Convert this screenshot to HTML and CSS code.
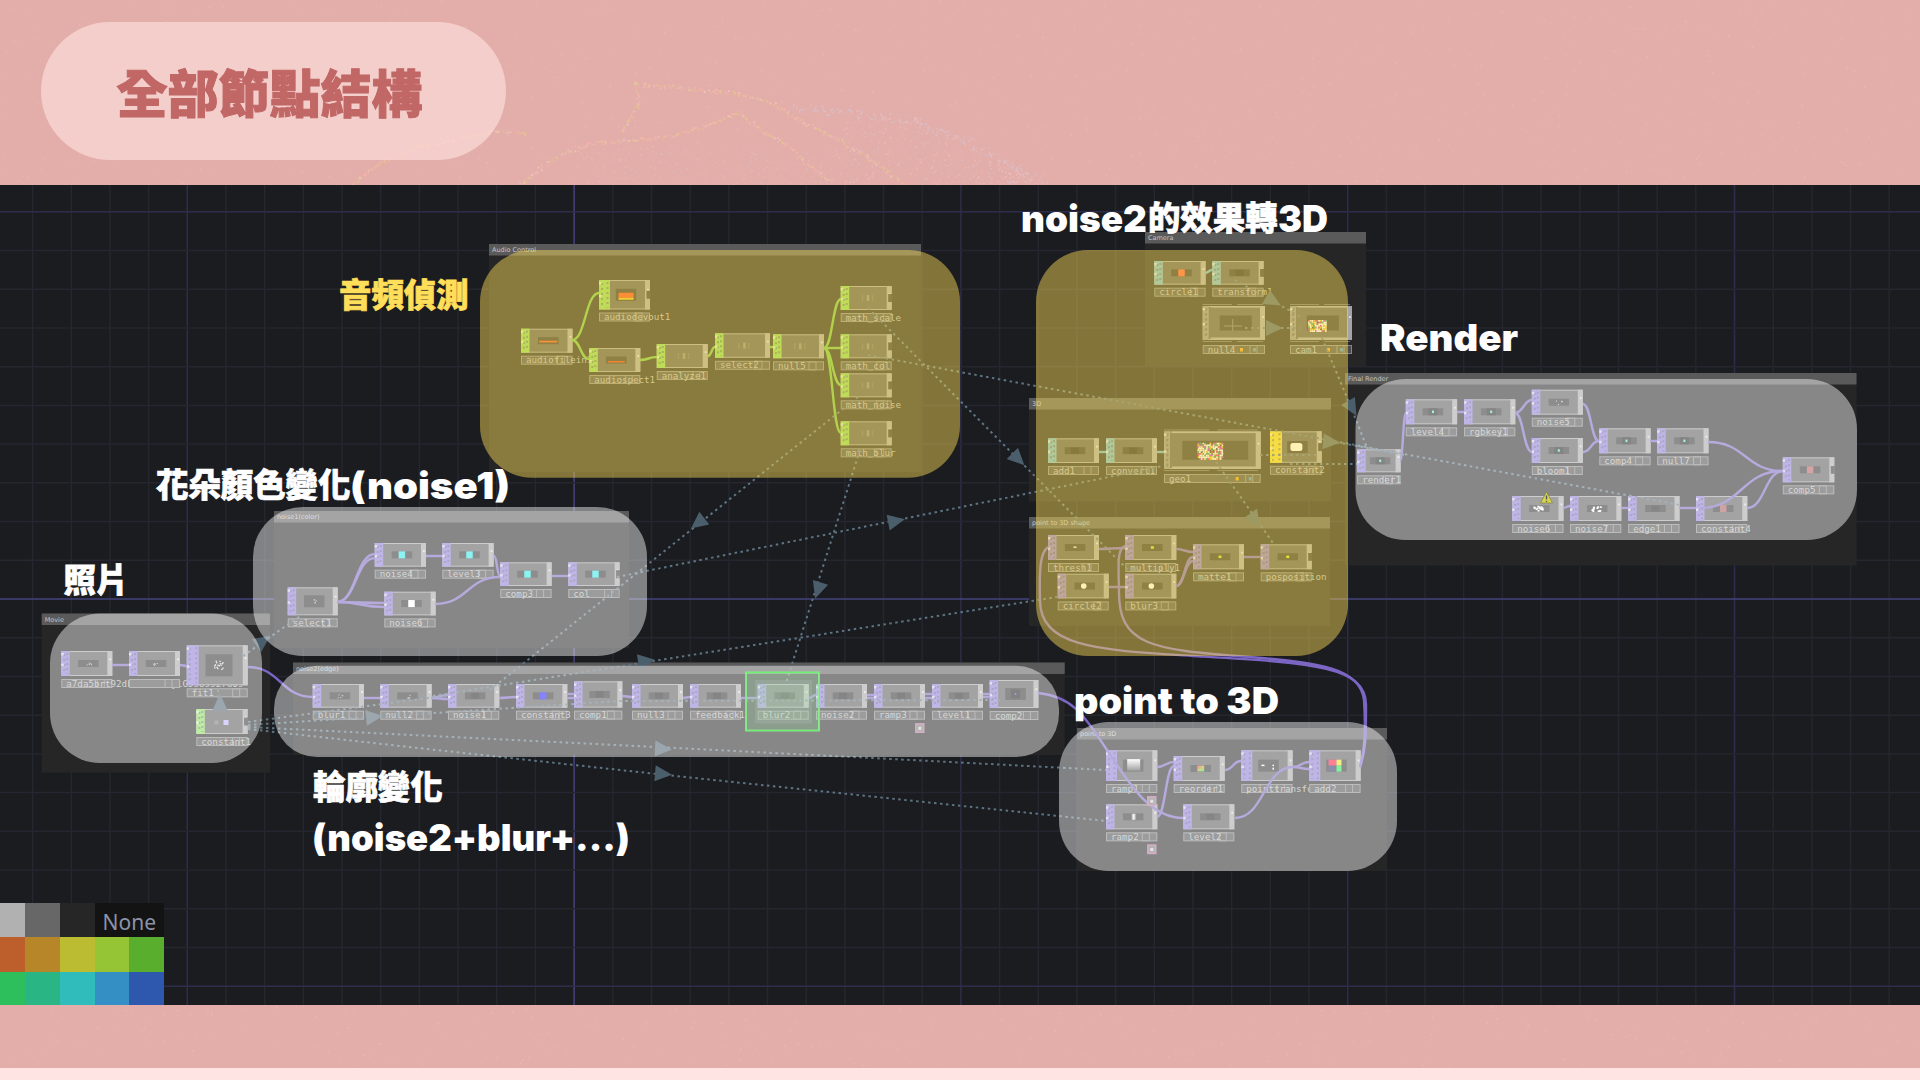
FILE: index.html
```html
<!DOCTYPE html>
<html lang="zh-Hant">
<head>
<meta charset="utf-8">
<title>全部節點結構</title>
<link rel="stylesheet" href="styles.css">
</head>
<body>
<div class="slide">
  <svg class="backdrop" id="backdrop" width="1920" height="1068" viewBox="0 0 1920 1068" aria-hidden="true"></svg>
  <header class="header">
    <h1 class="title">全部節點結構</h1>
  </header>
  <main class="network">
    <svg class="graph" id="graph" width="1920" height="820" viewBox="0 185 1920 820"></svg>
    <div class="palette">
      <span class="swatch light"></span><span class="swatch gray"></span><span class="swatch dark"></span><span class="swatch none">None</span>
      <span class="swatch rust"></span><span class="swatch ochre"></span><span class="swatch olive"></span><span class="swatch lime"></span><span class="swatch leaf"></span>
      <span class="swatch green"></span><span class="swatch jade"></span><span class="swatch teal"></span><span class="swatch sky"></span><span class="swatch blue"></span>
    </div>
  </main>
  <footer class="footer"></footer>
</div>
<script src="graph.js"></script>
</body>
</html>
```

FILE: styles.css
```css
* { box-sizing: border-box; }
body { margin: 0; background: #fee4e2; font-family: "Noto Sans CJK TC", sans-serif; }
.slide { position: relative; width: 1920px; height: 1080px; display: flex; flex-direction: column; overflow: hidden; }
.backdrop { position: absolute; left: 0; top: 0; background: #e3aeaa; }
.header { position: relative; height: 185px; flex: none; padding: 22px 0 0 41px; }
.title { margin: 0; width: 465px; height: 138px; border-radius: 69px; display: flex; align-items: center; justify-content: center; padding: 0 8px 0 0; background: rgba(253, 222, 220, .65); color: #c16766; font-size: 51px; font-weight: 900; line-height: 1; -webkit-text-stroke: 1px #c16766; }
.network { position: relative; height: 820px; flex: none; display: flex; align-items: flex-end; background: #1b1c20; }
.graph { position: absolute; left: 0; top: 0; display: block; }
.footer { flex: none; height: 63px; }

.palette { position: relative; display: grid; grid-template-columns: 25px 34.5px 35px 34.5px 34.5px; grid-template-rows: 34.5px 34.5px 33.5px; }
.swatch.light { background: #b1b1b1; }
.swatch.gray { background: #676767; }
.swatch.dark { background: #262626; }
.swatch.none { grid-column: span 2; background: #131314; color: #8b93a8; font: 21px/38px "Noto Sans", sans-serif; padding-left: 8px; }
.swatch.rust { background: #bd5e2d; }
.swatch.ochre { background: #b68629; }
.swatch.olive { background: #bbbc31; }
.swatch.lime { background: #95c435; }
.swatch.leaf { background: #5aae2e; }
.swatch.green { background: #2dbf5b; }
.swatch.jade { background: #29b584; }
.swatch.teal { background: #31bcbc; }
.swatch.sky { background: #338fc4; }
.swatch.blue { background: #2d58ae; }

.grid-minor { stroke: #25262f; stroke-width: 1.5; }
.grid-major { stroke: #2d2d4b; stroke-width: 1.5; }
.grid-origin { stroke: #45437c; stroke-width: 1.5; }
.group-body { fill: #262626; }
.group-bar { fill: #5a5a5a; }
.group-name { fill: #c4c4c4; font: 6.5px "DejaVu Sans", sans-serif; }
.node-body { fill: #585858; stroke: #a2a2a2; stroke-width: 1; }
.node-edge { fill: #a4a4a4; }
.node-notch { fill: #333; }
.node-screen { fill: #303030; }
.node-ticks { stroke: #4a4a60; stroke-width: 2; stroke-dasharray: 2 3; opacity: .55; fill: none; }
.label-box { fill: #4b4b4b; stroke: #858585; stroke-width: 1; }
.label-cell { fill: none; stroke: #858585; stroke-width: 1; }
.label-text { fill: #b8b8b8; font: 9.2px "DejaVu Sans Mono", monospace; }
.wire { fill: none; stroke-width: 2.4; }
.link { fill: none; stroke: #5d7482; stroke-width: 2; stroke-dasharray: 2.5 3.5; }
.arrow { fill: #4b5e6c; }
.zone-white { fill: #fff; fill-opacity: .45; }
.zone-yellow { fill: #ffde59; fill-opacity: .46; }
.selected { fill: rgba(80, 200, 80, .25); stroke: #4df05a; stroke-width: 1.6; }
.marker { fill: #777; stroke: #bf6a9a; stroke-width: 1.4; }
.caption-cjk { fill: #fff; stroke: #fff; stroke-width: .7; font: 900 32.4px "Noto Sans CJK TC", sans-serif; }
.caption-latin { fill: #fff; font: 900 37px Inter, sans-serif; }
.caption-gold { fill: #ffde59; stroke: #ffde59; }
```

FILE: graph.js
```js
const NS = 'http://www.w3.org/2000/svg';
const graph = document.getElementById('graph');
const backdrop = document.getElementById('backdrop');

function add(parent, tag, attrs, text) {
  const el = document.createElementNS(NS, tag);
  for (const k in attrs) el.setAttribute(k, attrs[k]);
  if (text !== undefined) el.textContent = text;
  parent.appendChild(el);
  return el;
}
const rect = (cls, x, y, w, h, extra) => add(graph, 'rect', Object.assign({ class: cls, x, y, width: w, height: h }, extra));

// Seeded generator, so the grain is the same on every load
let seed = 7;
function rnd() { seed = (seed * 16807) % 2147483647; return seed / 2147483647; }

function speck(x, y, r, fill, opacity) {
  add(backdrop, 'rect', { x: x.toFixed(1), y: y.toFixed(1), width: r, height: r, fill, opacity: opacity.toFixed(2) });
}
function trail(points, colors, spread) {
  for (let i = 0; i < points.length - 1; i++) {
    const [x1, y1] = points[i], [x2, y2] = points[i + 1];
    const n = Math.hypot(x2 - x1, y2 - y1) / 1.5;
    for (let k = 0; k < n; k++) {
      const t = k / n;
      speck(x1 + (x2 - x1) * t + (rnd() - .5) * spread, y1 + (y2 - y1) * t + (rnd() - .5) * spread,
        1.8, colors[Math.floor(rnd() * colors.length)], .2 + rnd() * .55);
    }
  }
}
for (let i = 0; i < 900; i++) speck(rnd() * 1920, rnd() * 184, 1.6, '#f0c4bd', .12 + rnd() * .3);
for (let i = 0; i < 350; i++) speck(rnd() * 1920, 1006 + rnd() * 60, 1.6, '#f0c4bd', .12 + rnd() * .3);
const warm = ['#e6d183', '#f5b9a5', '#f7c6c8', '#e3cf8c', '#ffb5a8'];
trail([[634,84],[683,87],[737,93],[775,103],[795,118],[834,137],[868,157],[904,184]], warm, 4);
trail([[519,184],[557,155],[591,143],[664,137],[708,125],[737,112],[766,133],[785,143],[809,165],[834,184]], warm, 4);
trail([[634,80],[638,103],[621,132]], warm, 3);
trail([[351,184],[380,162],[417,147],[499,130],[527,133]], warm, 3);
trail([[790,108],[830,110],[911,120],[965,140],[1047,184]], ['#d8c3cf', '#ecc3c6', '#cfc6d8'], 9);
for (let i = 0; i < 330; i++) {
  const x = 840 + rnd() * 190, top = 116 + Math.max(0, x - 915) * .5;
  speck(x, top + rnd() * (184 - top), 1.6, rnd() > .5 ? '#d6c6d4' : '#f2c5c5', .15 + rnd() * .45);
}
for (let i = 0; i < 230; i++) {
  const x = 570 + rnd() * 270;
  speck(x, 145 + rnd() * 39, 1.6, rnd() > .5 ? '#d6c6d4' : '#f5bcb6', .1 + rnd() * .4);
}

// Grid
for (let k = -4; k < 46; k++) {
  const x = 187.3 + k * 38.68;
  add(graph, 'line', { x1: x, x2: x, y1: 185, y2: 1005, class: k === 10 ? 'grid-origin' : k % 10 ? 'grid-minor' : 'grid-major' });
}
for (let k = -10; k < 11; k++) {
  const y = 599 + k * 38.72;
  add(graph, 'line', { x1: 0, x2: 1920, y1: y, y2: y, class: k === 0 ? 'grid-origin' : k % 10 ? 'grid-minor' : 'grid-major' });
}

// Groups: name, left, top, right, bottom
[
  ['Audio Control', 489, 244, 921, 472], ['Camera', 1145, 232, 1366, 366], ['3D', 1029, 398, 1331, 501.5],
  ['point to 3D shape', 1029, 517, 1330, 626], ['Final Render', 1345, 373, 1856.5, 565.5], ['Movie', 41.7, 613.5, 270, 772.7],
  ['noise1(color)', 274, 511, 629, 648], ['noise2(edge)', 293, 662.5, 1064.7, 755], ['point to 3D', 1077, 728, 1387, 871]
].forEach(([name, l, t, r, b]) => {
  rect('group-body', l, t, r - l, b - t);
  rect('group-bar', l, t, r - l, 11.5);
  add(graph, 'text', { class: 'group-name', x: l + 3, y: t + 8 }, name);
});

const TOP = '#7c66c4', CHOP = '#70c646', SOP = '#66b4cc';
const STRIP = { top: '#8b78d4', chop: '#8ada5a', sop: '#6fb8d0', mat: '#ecda30', comp: '#8c8c8c' };

function wire(x1, y1, x2, y2, color) {
  const m = (x1 + x2) / 2;
  add(graph, 'path', { class: 'wire', stroke: color || TOP, d: `M${x1} ${y1}C${m} ${y1} ${m} ${y2} ${x2} ${y2}` });
}
function curve(d) { add(graph, 'path', { class: 'wire', stroke: TOP, d }); }

// Nodes: kind, name, x, y, w, h, thumbnail colour, open right side
const nodes = [
  ['chop','audiofilein1',521,328.7,51.5,24,'bar'], ['chop','audiodevout1',599,280,51,29.5,'block',1], ['chop','audiospect1',589.3,348,51,24,'line'],
  ['chop','analyze1',656.7,344,51,24,'dots'], ['chop','select2',715,333.3,55,24.5,'dots'], ['chop','null5',773,334.3,51,24,'dots'],
  ['chop','math_scale',840.7,286,51,24,'dots',1], ['chop','math_col',840.7,334.3,51,24,'dots',1], ['chop','math_noise',840.7,373.3,51,24,'dots',1], ['chop','math_blur',840.7,421.3,51,24,'dots',1],
  ['sop','circle1',1154.3,261,51.3,23.7,'#ff5a38'], ['sop','transform1',1212.3,261,51.3,23.7,'',1],
  ['comp','null4',1202.7,306,62.3,34,'cross'], ['comp','cam1',1290,306,62,34,'confettiL'],
  ['sop','add1',1048,438.3,51,24.7,''], ['sop','convert1',1106,438.3,51,24.7,''], ['comp','geo1',1164,431.5,96.7,37.5,'confetti'], ['mat','constant2',1270,431.3,51.7,31.5,'blob',1],
  ['top','thresh1',1048,535,51,25,'flat'], ['top','multiply1',1125.3,535,51,25,'lime'], ['top','matte1',1193,544.3,51,25,'lime'], ['top','posposition',1260.7,544.3,51,25,'lime',1],
  ['top','circle2',1057.7,573.7,51,24.7,'disc'], ['top','blur3',1125.3,573.7,51,24.7,'disc'],
  ['top','render1',1357.2,449.3,43.4,23,'speck'], ['top','level4',1405.8,399.3,51.3,25,'speck'], ['top','rgbkey1',1464,399.3,51.3,25,'speck'], ['top','noise5',1531.8,389.7,51,25,'grain'],
  ['top','bloom1',1531.8,438,51,25,'speck'], ['top','comp4',1599.3,428.3,51.3,25,'speck'], ['top','null7',1657.2,428.3,51.3,25,'speck'], ['top','comp5',1782.8,457.3,51.5,25,'#b35a5a',1],
  ['top','noise6',1512.2,496,51.3,25,'snow'], ['top','noise7',1570,496,51.3,25,'snow'], ['top','edge1',1628.2,496,51.3,25,''], ['top','constant4',1696,496,51.3,25,'#a85858'],
  ['top','a7da5brt92dbue5db2mylG5s8ss27d0s',61.3,651,51,25,'grain'], ['top','',129,651,51,25,'grain'], ['top','fit1',186.7,645.3,61,40,'flower'], ['chop','constant1',196.3,709,51.3,25,'violet',1],
  ['top','select1',287.7,587.3,50,28,'grain'], ['top','noise4',374.7,543,51.3,23.7,'#2fe8e8'], ['top','level3',442.3,543,51.3,23.7,'#2fe8e8'], ['top','noise6',384.3,591.7,51.3,23.7,'#fff'],
  ['top','comp3',500.3,562.3,51.3,23.7,'#2fe8e8'], ['top','col',568.3,562.3,51.3,23.7,'#2fe8e8',1],
  ['top','blur1',312.7,684,51.3,23.7,'grain'], ['top','null2',380.3,684,51.3,23.7,'grain'], ['top','noise1',448,684,51.3,23.7,''], ['top','constant3',516,684,51.3,23.7,'#2020ff'],
  ['top','comp1',574,681.3,48.3,26.3,''], ['top','null3',632,684,51,23.7,''], ['top','feedback1',690,684,51,23.7,''], ['top','blur2',757.7,684,51,23.7,''],
  ['top','noise2',816,684,51,23.7,''], ['top','ramp3',874,684,51,23.7,''], ['top','level1',932,684,51,23.7,''], ['top','comp2',989.7,680,48.7,28,'blue'],
  ['top','ramp1',1106,750.3,51.3,30.7,'fade'], ['top','reorder1',1173.7,756,51,25,'mix'], ['top','pointtransform1',1241.3,750.3,51.3,30.7,'pips'], ['top','add2',1309.3,750.3,51.3,30.7,'quad'],
  ['top','ramp2',1106,804.3,51.3,25,'shine'], ['top','level2',1183.3,804.3,51,25,'']
];

const defs = add(graph, 'defs', {});
const g1 = add(defs, 'linearGradient', { id: 'fade', x2: 0, y2: 1 });
add(g1, 'stop', { offset: 0, 'stop-color': '#fff' }); add(g1, 'stop', { offset: 1, 'stop-color': '#555' });
const g2 = add(defs, 'linearGradient', { id: 'mix', x2: 1, y2: 1 });
add(g2, 'stop', { offset: 0, 'stop-color': '#f03030' }); add(g2, 'stop', { offset: .55, 'stop-color': '#a8b030' }); add(g2, 'stop', { offset: 1, 'stop-color': '#20e030' });
const g3 = add(defs, 'linearGradient', { id: 'shine' });
add(g3, 'stop', { offset: 0, 'stop-color': '#444' }); add(g3, 'stop', { offset: .5, 'stop-color': '#fff' }); add(g3, 'stop', { offset: 1, 'stop-color': '#444' });

function confetti(x, y, w, h) {
  const colors = ['#fff', '#fff', '#ffe9b8', '#e83070', '#fff', '#c040d0', '#f0c020', '#30a070'];
  for (let j = 0; j < h; j += 1.7) for (let i = 0; i < w; i += 1.7)
    if (rnd() > .12) rect('', x + i + rnd() * .5, y + j, 1.8, 1.8, { fill: colors[Math.floor(rnd() * 8)] });
}

function thumb(kind, x, y, w, h) {
  const cx = x + w * .53, cy = y + h / 2, box = (bw, bh, fill) => rect('', cx - bw / 2, cy - bh / 2, bw, bh, { fill });
  if (kind === 'dots') {
    for (let i = -1; i < 2; i++) rect('', cx - 1 + i * 5, cy - 3, i ? 1.5 : 2.5, 6, { fill: i ? '#6c6c68' : '#88887c' });
    return;
  }
  if (kind === 'violet') { rect('', cx - 9, cy - 1, 4, 4, { fill: '#777' }); rect('', cx, cy - 1.5, 5, 5, { fill: '#bcb0ff' }); return; }
  const sw = w < 60 ? 20.5 : w < 80 ? 32 : 66, sh = w > 80 ? 19 : h > 32 ? 15 : h > 26.5 ? 12 : 7;
  if (kind === 'flower') { box(27, 22, '#303030'); for (let i = 0; i < 16; i++) rect('', cx - 5 + rnd() * 9, cy - 5 + rnd() * 9, 1.3, 1.3, { fill: '#eee' }); return; }
  rect('node-screen', cx - sw / 2, cy - sh / 2, sw, sh);
  if (kind && kind[0] === '#') box(6.5, 7, kind);
  else if (kind === 'bar') rect('', cx - 9, cy, 18, 1.8, { fill: '#f05020' });
  else if (kind === 'line') rect('', cx - 8.5, cy + 1, 17, 1.5, { fill: '#f03810' });
  else if (kind === 'block') { rect('', cx - 7.5, cy - 2, 15, 5, { fill: '#ff4818' }); rect('', cx - 7.5, cy + 3, 15, 2, { fill: '#e8c010' }); }
  else if (kind === 'confetti') confetti(cx - 18, cy - 7.5, 25, 16);
  else if (kind === 'confettiL') confetti(cx - 15, cy - 3, 17, 11);
  else if (kind === 'cross') add(graph, 'path', { d: `M${cx - 12} ${cy + 3}h18M${cx - 3} ${cy - 4}v12`, stroke: '#777', fill: 'none' });
  else if (kind === 'blob') rect('', cx - 7, cy - 4, 12, 8, { fill: '#fff', rx: 2.5 });
  else if (kind === 'disc') add(graph, 'circle', { cx: cx - 1, cy, r: 2.8, fill: '#fff' });
  else if (kind === 'flat') rect('', cx - 1.5, cy - 1, 3, 1.3, { fill: '#fff' });
  else if (kind === 'lime') { box(3, 2.5, '#c8e020'); }
  else if (kind === 'speck') { box(9, 7, '#202020'); box(2, 2.5, '#50e8d0'); }
  else if (kind === 'grain') for (let i = 0; i < 5; i++) rect('', cx - 3 + rnd() * 6, cy - 2 + rnd() * 4, 1, 1, { fill: '#c8c8c8' });
  else if (kind === 'snow') for (let i = 0; i < 12; i++) rect('', cx - 6 + rnd() * 9, cy - 3 + rnd() * 5, 2, 1.6, { fill: '#fff' });
  else if (kind === 'blue') { box(9, 9, '#1c1c1c'); box(1.5, 1.5, '#5070ff'); }
  else if (kind === 'fade') rect('', cx - 6, cy - 6.5, 13, 11.5, { fill: 'url(#fade)' });
  else if (kind === 'mix') box(7, 6, 'url(#mix)');
  else if (kind === 'shine') rect('', cx - 2, cy - 3, 5, 6, { fill: 'url(#shine)' });
  else if (kind === 'pips') { rect('', cx - 7, cy - 1, 3, 1.5, { fill: '#fff' }); rect('', cx + 4, cy - 1, 1.5, 1.5, { fill: '#fff' }); rect('', cx + 4, cy + 2, 1.5, 2, { fill: '#fff' }); }
  else if (kind === 'quad') {
    [['#ff1840', -8, -6], ['#e8e020', 0, -6], ['#303060', -8, 0], ['#20e850', 0, 0]].forEach(([f, dx, dy]) =>
      rect('', cx + dx + (dx ? 0 : 0), cy + dy, dx ? 8 : 5, 6, { fill: f }));
  }
  else box(8, sh - 1, '#222');
}

rect('', 755, 680, 57, 43.5, { fill: '#3b3442' });
nodes.forEach(([kind, name, x, y, w, h, pic, open]) => {
  const sw = kind === 'mat' ? 12 : h > 35 && w < 70 ? 12 : pic === 'block' ? 11 : kind === 'comp' ? 6 : h > 30 && kind === 'top' ? 11 : 8.5;
  rect('node-body', x + .5, y + .5, w - 1, h - 1);
  rect('node-edge', x + w - 5, y, 5, h);
  rect('', x, y, sw, h, { fill: STRIP[kind] });
  add(graph, 'path', { class: 'node-ticks', d: `M${x + sw - 2.5} ${y + 2}v${h - 4}M${x + 3} ${y + 3}v${h - 5}` });
  rect('', x, y + 2, 2.5, 2.5, { fill: '#fff', opacity: .6 });
  rect('', x, y + h / 2, 2.5, 2.5, { fill: '#fff', opacity: .6 });
  rect('', x + w - 3, y + h * .3, 1.8, 1.8, { fill: '#fff', opacity: .7 });
  if (kind === 'comp') {
    rect('node-edge', x + 8, y, w - 12, 1.6); rect('node-edge', x + 8, y + h - 2.5, w - 12, 2.5);
    add(graph, 'path', { d: `M${x} ${y - 1.5}h${w * .47}M${x + w * .55} ${y - 1.5}h${w * .42}M${x} ${y + h + 1.5}h${w * .47}M${x + w * .55} ${y + h + 1.5}h${w * .42}`, stroke: '#666', fill: 'none' });
  }
  if (open) rect('node-notch', x + w - 3.5, y + h / 2 - 4, 4, 8);
  thumb(pic, x, y, w, h);
  const ly = y + h + (kind === 'comp' ? 5 : 3);
  rect('label-box', x + .5, ly + .5, w - 1, 8);
  rect('label-cell', x + w - 15, ly + .5, 7, 8);
  if (kind === 'comp') [['#f0a010', 23], ['#4a90c0', 10]].forEach(([fill, dx]) => rect('', x + w - dx - 2, ly + 3, 3, 3.5, { fill }));
  if (name) add(graph, 'text', { class: 'label-text', x: x + 5, y: ly + 7.6 }, name);
});

// Audio wires
wire(572,340,599,293,CHOP); wire(572,340,589,359,CHOP); wire(640,360,657,357,CHOP); wire(708,356,715,347,CHOP); wire(770,347,773,347,CHOP);
[299,348,385,433].forEach(y => wire(824,348,841,y,CHOP));
wire(1205,273,1212,270,SOP); wire(1099,452,1106,452,SOP); wire(1157,452,1164,452,SOP);
// Image wires
[
  [1099,549,1125,548],[1176,549,1193,552],[1244,557,1261,557],[1109,587,1125,587],[1176,586,1193,557],[1176,586,1193,561],
  [1400,461,1406,413],[1457,412,1464,412],[1515,413,1532,400],[1515,413,1532,452],[1583,404,1599,441],[1583,452,1599,441],[1650,441,1657,441],
  [1708,442,1783,471],[1563,508,1570,506],[1621,508,1628,508],[1679,508,1696,508],[1700,508,1783,471],[1747,508,1783,471],
  [112,665,129,665],[180,665,187,666],[248,667,313,697],[337,602,375,554],[337,602,375,558],[337,602,384,603],[337,602,384,607],
  [426,556,442,556],[494,556,500,576],[435,604,500,577],[552,576,568,576],
  [364,698,380,698],[431,698,448,695],[431,698,448,699],[499,698,516,697],[567,694,574,694],[567,698,574,698],[622,696,632,697],[683,698,690,697],
  [741,698,758,698],[809,698,816,695],[867,695,874,695],[867,698,874,698],[925,694,932,694],[925,698,932,698],[983,694,990,694],[983,697,990,697],
  [1157,767,1174,762],[1157,817,1174,766],[1225,770,1241,761],[1293,767,1309,762],[1293,767,1309,769],[1235,818,1293,767]
].forEach(p => wire(...p));
curve('M1038 693C1075 696 1088 722 1107 750S1148 818 1183 818');
curve('M1360 767C1366 750 1366 735 1366 705C1366 665 1310 663 1193 656C1100 650 1040 648 1040 600C1039 565 1041 552 1048 547');
curve('M1360 767C1365 750 1366 730 1364 700C1360 668 1320 663 1250 657C1150 650 1118 645 1119 590C1118 560 1118 548 1125 546');

// Reference links between nodes
[
  'M868 308L1130 572', 'M868 355L1680 505', 'M858 397L490 690', 'M860 450L786 683', 'M617 577L1163 466', 'M433 696L1057 597',
  'M248 722L450 695', 'M248 725L620 701L1000 700', 'M248 727L657 747L1106 770', 'M248 729L427 749L657 774L1106 821', 'M243 656L303 614', 'M218 710V690',
  'M1235 280L1303 318', 'M1245 328H1300', 'M1322 338L1351 407L1367 448', 'M1216 462L1273 543', 'M1260 455H1320', 'M1325 440L1405 455', 'M1290 464H1357'
].forEach(d => add(graph, 'path', { class: 'link', d }));
[
  [1018,459,45],[698,523,142],[818,590,108],[896,521,-11],[646,661,-8],[374,717,-6],[663,749,3],[663,774,5],[263,641,-35],[220,703,-90],
  [1273,301,30],[1274,328,0],[1352,408,60],[1255,520,55],[1331,442,5]
].forEach(([x, y, a]) => add(graph, 'path', { class: 'arrow', d: 'M-8 -8L9 0L-8 8Z', transform: `translate(${x} ${y}) rotate(${a})` }));

rect('selected', 746, 672.5, 73, 58);
[[915.8,723.8],[1147.8,796.8],[1147.8,845]].forEach(([x, y]) => { rect('marker', x, y, 8, 8.5); rect('', x + 2.5, y + 3, 3, 3, { fill: '#ccc' }); });

// Translucent zones over the graph
[
  ['yellow', 480, 250, 960, 477.7, 52], ['yellow', 1036, 250, 1348, 656, 52], ['white', 1355.5, 379, 1857, 540, 50], ['white', 50, 613.5, 262, 763, 50],
  ['white', 253, 507, 647, 656, 50], ['white', 274, 665.7, 1059, 757, 43], ['white', 1059, 722, 1397, 871, 50]
].forEach(([c, l, t, r, b, rx]) => rect('zone-' + c, l, t, r - l, b - t, { rx }));

rect('', 745.8, 672.3, 73.5, 58.3, { fill: 'none', stroke: '#6df070', 'stroke-width': 1.3 });
add(graph, 'path', { d: 'M1546.500 492L1552.500 503H1540.500Z', fill: '#d8d450', stroke: '#8a8840', 'stroke-width': .8 });
add(graph, 'path', { d: 'M1546.500 495.500V499.500M1546.500 500.700V502', stroke: '#555', 'stroke-width': 1.3 });

// Captions
const han = (s, x, y, extra = '') => add(graph, 'text', { class: 'caption-cjk ' + extra, x, y }, s);
const latin = (s, x, y, w) => add(graph, 'text', { class: 'caption-latin', x, y, textLength: w, lengthAdjust: 'spacingAndGlyphs' }, s);
han('音頻偵測', 339, 307, 'caption-gold');
latin('noise2', 1021, 231.5, 126); han('的效果轉', 1148, 229.5); latin('3D', 1278, 231.5, 50);
latin('Render', 1380, 350.5, 138);
han('花朵顏色變化', 156, 497); latin('(noise1)', 350, 499, 160);
han('照片', 63.5, 592);
latin('point to 3D', 1074, 713.5, 205);
han('輪廓變化', 313, 799); latin('(noise2+blur+...)', 312, 851.3, 318);
```
